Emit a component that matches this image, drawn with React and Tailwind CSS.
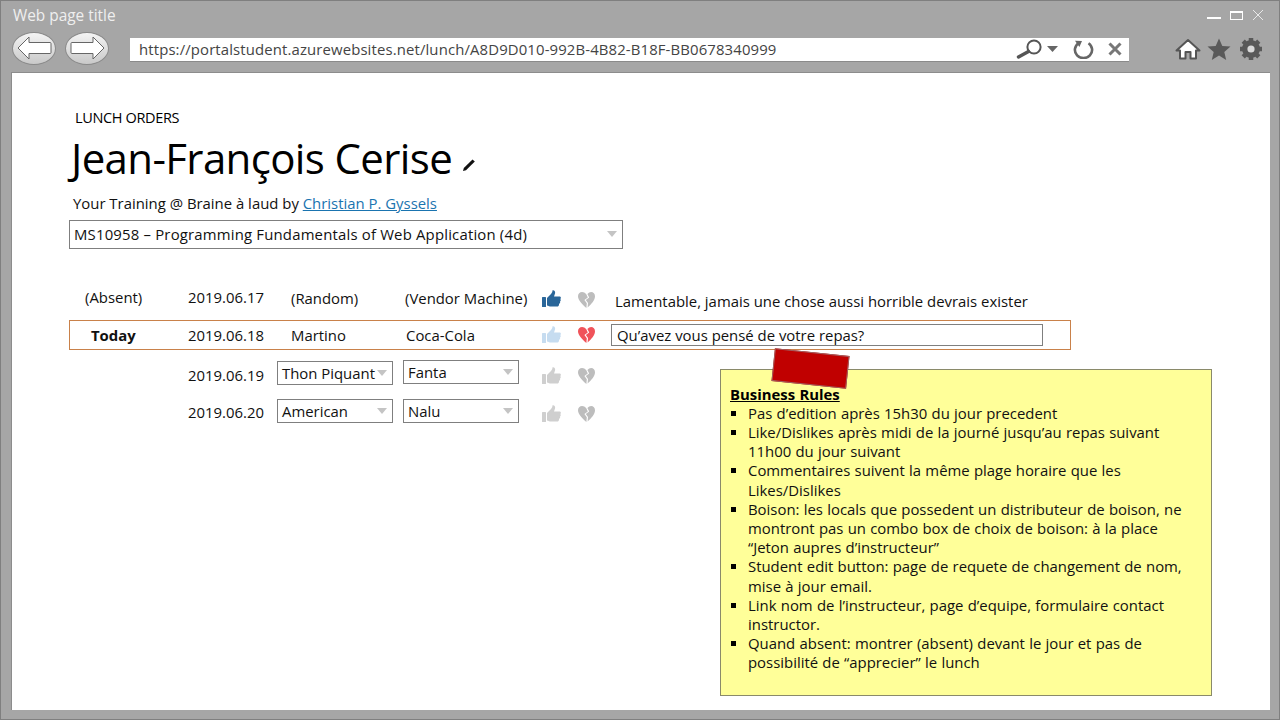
import React from 'react';

const font = { fontFamily: '"Open Sans", "Noto Sans", sans-serif' };

const Caret = ({ className = '' }) => (
  <svg width="10" height="6" viewBox="0 0 10 6" className={className}>
    <path d="M0 0h10L5 6z" fill="#c4c4c4" />
  </svg>
);

const ThumbUp = ({ color }) => (
  <svg width="19" height="18" viewBox="0 0 19 18" className="block">
    <rect x="0" y="7" width="4" height="10" rx="0.5" fill={color} />
    <path d="M5 8 L9 4 C10 3 10.5 1.5 10.5 0.3 C12.5 -0.2 13.5 1.5 13 3.5 L12 6.5 L17.5 6.5 C19 6.5 19.3 8.2 18.3 9 C19 10 18.8 11 18 11.6 C18.4 12.6 18 13.6 17 14 C17.2 15.4 16.4 16.5 15 16.5 L9 16.5 C7.5 16.5 6.5 16 5 15.5 Z" fill={color} />
  </svg>
);

const BrokenHeart = ({ color }) => (
  <svg width="17" height="16" viewBox="0 0 17 16" className="block">
    <path d="M8.3 2.2 C7 0.7 5.6 0 4.1 0 C1.7 0 0 1.9 0 4.3 C0 8.2 4.4 12.6 8.4 16 L8.8 11.2 L6.4 8 L9.8 5.4 Z" fill={color} />
    <path d="M9.4 2 C10.5 0.7 11.8 0 13.1 0 C15.4 0 17 1.9 17 4.3 C17 8.2 13.2 12.4 9.6 15.6 L10 11 L7.8 8.1 L11.2 5.5 Z" fill={color} />
  </svg>
);

const Select = ({ label, className = '' }) => (
  <div className={`flex items-center justify-between border border-[#7f7f7f] bg-white pl-1 pr-[5px] h-6 text-[14.9px] text-[#111] ${className}`}>
    <span className="whitespace-nowrap">{label}</span>
    <Caret />
  </div>
);

const NavButton = ({ flip }) => (
  <div className="w-[44px] h-[33px] rounded-[50%] border border-[#8a8a8a] bg-gradient-to-b from-[#f4f4f4] to-[#c9c9c9] flex items-center justify-center">
    <svg width="35" height="24" viewBox="0 0 35 24" className={flip ? 'rotate-180' : ''}>
      <path d="M1 12 L12 1 V6.5 H33 Q34 6.5 34 7.5 V16.5 Q34 17.5 33 17.5 H12 V23 Z" fill="#fff" stroke="#666" strokeWidth="1" />
    </svg>
  </div>
);

const rules = [
  'Pas d’edition après 15h30 du jour precedent',
  'Like/Dislikes après midi de la journé jusqu’au repas suivant 11h00 du jour suivant',
  'Commentaires suivent la même plage horaire que les Likes/Dislikes',
  'Boison: les locals que possedent un distributeur de boison, ne montront pas un combo box de choix de boison: à la place “Jeton aupres d’instructeur”',
  'Student edit button: page de requete de changement de nom, mise à jour email.',
  'Link nom de l’instructeur, page d’equipe, formulaire contact instructor.',
  'Quand absent: montrer (absent) devant le jour et pas de possibilité de “apprecier” le lunch',
];

const App = () => {
  return (
    <div style={font} className="relative w-[1280px] h-[720px] overflow-hidden bg-[#a6a6a6] border border-[#7f7f7f] pl-[10px] pr-[10px] flex flex-col">
      {/* Title bar */}
      <div className="h-[71px] shrink-0 relative pl-[1px]">
        <div className="flex items-center justify-between h-[30px] pr-[5px]">
          <span className="text-[15.4px] text-[#efefef] ml-[1px] -mt-[1px]">Web page title</span>
          <div className="flex items-center gap-[9px] -mt-[2px]">
            <div className="w-[14px] h-[2px] bg-white mt-[6px]" />
            <div className="w-[13px] h-[9px] border border-white border-t-2" />
            <svg width="12" height="12" viewBox="0 0 12 12"><path d="M1 1l10 10M11 1L1 11" stroke="#e8e8e8" strokeWidth="1" /></svg>
          </div>
        </div>
        <div className="flex items-center h-[34px]">
          <NavButton />
          <div className="w-[9px]" />
          <NavButton flip />
          <div className="w-[21px]" />
          <div className="w-[999px] h-6 mt-[3px] bg-white flex items-center pl-[9px] pr-[7px] text-[14.9px] text-[#444] border-b border-[#8a8a8a]">
            <span className="flex-1 whitespace-nowrap tracking-[0.13px]">https://portalstudent.azurewebsites.net/lunch/A8D9D010-992B-4B82-B18F-BB0678340999</span>
            <svg width="28" height="20" viewBox="0 0 28 20" className="mr-[3px]">
              <circle cx="18" cy="8" r="6.6" fill="none" stroke="#555" strokeWidth="2" />
              <path d="M2.5 18 L12.5 12.5" stroke="#555" strokeWidth="3.4" strokeLinecap="round" />
            </svg>
            <svg width="11" height="6" viewBox="0 0 11 6" className="mr-[14px]"><path d="M0 0h11L5.5 6z" fill="#666" /></svg>
            <svg width="23" height="19" viewBox="0 0 23 19" className="mr-[13px]">
              <path d="M6.5 3.2 A8.6 8.2 0 1 0 16.5 3.2" fill="none" stroke="#666" strokeWidth="2.6" />
              <path d="M3 0.8 L10 1 L7.4 7 Z" fill="#666" />
            </svg>
            <svg width="14" height="14" viewBox="0 0 14 14"><path d="M1.5 1.5l11 11M12.5 1.5l-11 11" stroke="#777" strokeWidth="3" /></svg>
          </div>
          <div className="flex items-center ml-[46px] mt-[1px]">
            <svg width="26" height="22" viewBox="0 0 26 22">
              <path d="M13 2 L1.5 12.5 L5 12.5 V20.5 H10.5 V14 H15.5 V20.5 H21 V12.5 L24.5 12.5 Z" fill="#fff" stroke="#555" strokeWidth="2" strokeLinejoin="round" />
            </svg>
            <svg width="24" height="22" viewBox="0 0 24 22" className="ml-[6px]"><path d="M12 0.5l3.3 7.4 8.2.7-6.2 5.3 1.9 8L12 17.6 4.8 21.9l1.9-8L.5 8.6l8.2-.7z" fill="#595959" /></svg>
            <svg width="26" height="24" viewBox="0 0 26 24" className="ml-[7px]">
              <circle cx="13" cy="12" r="6.5" fill="none" stroke="#595959" strokeWidth="5" />
              <path d="M13 1v22M2 12h22M5.2 4.2l15.6 15.6M20.8 4.2L5.2 19.8" stroke="#595959" strokeWidth="4.5" />
              <circle cx="13" cy="12" r="3.6" fill="#d9d9d9" />
            </svg>
          </div>
        </div>
      </div>

      {/* Page */}
      <div className="relative h-[638px] w-[1259px] bg-white border-t border-l border-[#8c8c8c] text-[#111] shrink-0">
        <div className="pt-[35px] pl-[63px]">
          <div className="text-[14.5px] leading-5 tracking-[-0.024em] text-black">LUNCH ORDERS</div>
          <div className="flex items-end -ml-[4px] mt-[4px]">
            <h1 className="text-[42px] leading-[52px] text-black font-normal tracking-[-0.015em]">Jean-François Cerise</h1>
            <svg width="14" height="14" viewBox="0 0 14 14" className="ml-[10px] mb-[12px]">
              <path d="M1 13 L1.8 10 L10.5 1.5 L12.8 3.6 L4 12.2 Z" fill="#111" />
            </svg>
          </div>
          <div className="text-[14.9px] leading-5 -ml-[2px] mt-[9px]">
            Your Training @ Braine à laud by <a href="#" className="text-[#1a74b0] underline">Christian P. Gyssels</a>
          </div>
          <div className="w-[554px] h-[29px] -ml-[6px] mt-[7px] border border-[#7f7f7f] flex items-center justify-between pl-1 pr-[5px] text-[14.9px]">
            <span className="tracking-[0.19px]">MS10958 – Programming Fundamentals of Web Application (4d)</span>
            <Caret className="mb-[2px]" />
          </div>
        </div>

        {/* Lunch rows */}
        <div className="mt-[29px] ml-[57px] w-[1002px] text-[14.9px]">
          <div className="flex items-start h-[43px] pt-[8px]">
            <span className="w-[119px] pl-[16px]">(Absent)</span>
            <span className="w-[103px]">2019.06.17</span>
            <span className="w-[114px] mt-[1px]">(Random)</span>
            <span className="w-[137px] mt-[1px] whitespace-nowrap">(Vendor Machine)</span>
            <span className="w-[36px] mt-[4px]"><ThumbUp color="#2a6699" /></span>
            <span className="w-[37px] mt-[6px]"><BrokenHeart color="#bdbdbd" /></span>
            <span className="mt-[4px] whitespace-nowrap">Lamentable, jamais une chose aussi horrible devrais exister</span>
          </div>
          <div className="flex items-center h-[30px] border border-[#c9814a] -mt-[1px]">
            <span className="w-[118px] pl-[21px] font-bold mt-[1px]">Today</span>
            <span className="w-[103px]">2019.06.18</span>
            <span className="w-[114px]">Martino</span>
            <span className="w-[137px] pl-[1px]">Coca-Cola</span>
            <span className="w-[36px]"><ThumbUp color="#c6dcf0" /></span>
            <span className="w-[33px]"><BrokenHeart color="#f0535a" /></span>
            <div className="w-[432px] h-[22px] border border-[#7f7f7f] flex items-center pl-[5px]">Qu’avez vous pensé de votre repas?</div>
          </div>
          <div className="flex items-start h-[38px]">
            <span className="w-[119px]" />
            <span className="w-[89px] mt-[14px]">2019.06.19</span>
            <Select label="Thon Piquant" className="w-[116px] mt-[11px]" />
            <Select label="Fanta" className="w-[116px] ml-[10px] mt-[10px]" />
            <span className="w-[19px] ml-[23px] mt-[17px]"><ThumbUp color="#cfcfcf" /></span>
            <span className="ml-[17px] mt-[18px]"><BrokenHeart color="#bdbdbd" /></span>
          </div>
          <div className="flex items-start h-[38px]">
            <span className="w-[119px]" />
            <span className="w-[89px] mt-[13px]">2019.06.20</span>
            <Select label="American" className="w-[116px] mt-[11px]" />
            <Select label="Nalu" className="w-[116px] ml-[10px] mt-[11px]" />
            <span className="w-[19px] ml-[23px] mt-[17px]"><ThumbUp color="#cfcfcf" /></span>
            <span className="ml-[17px] mt-[18px]"><BrokenHeart color="#bdbdbd" /></span>
          </div>
        </div>

        {/* Sticky note */}
        <div className="absolute left-[708px] top-[296px] w-[492px] h-[327px] bg-[#ffff99] border border-[#8a8a6a] pl-[9px] pr-[18px] pt-[15px] text-[14.9px] leading-[19.2px] text-[#111] [word-spacing:0.4px]">
          <div className="font-bold underline text-black -mb-[0.5px]">Business Rules</div>
          <ul>
            {rules.map((rule) => (
              <li key={rule} className="flex">
                <span className="w-[18px] shrink-0 pt-[7px] pl-[1px]"><span className="block w-[5px] h-[5px] bg-black" /></span>
                <span>{rule}</span>
              </li>
            ))}
          </ul>
        </div>
        <div className="absolute left-[761px] top-[279px] w-[75px] h-[33px] bg-[#c00000] border border-[#a06060] rotate-[6deg]" />
      </div>
    </div>
  );
};

export default App;
